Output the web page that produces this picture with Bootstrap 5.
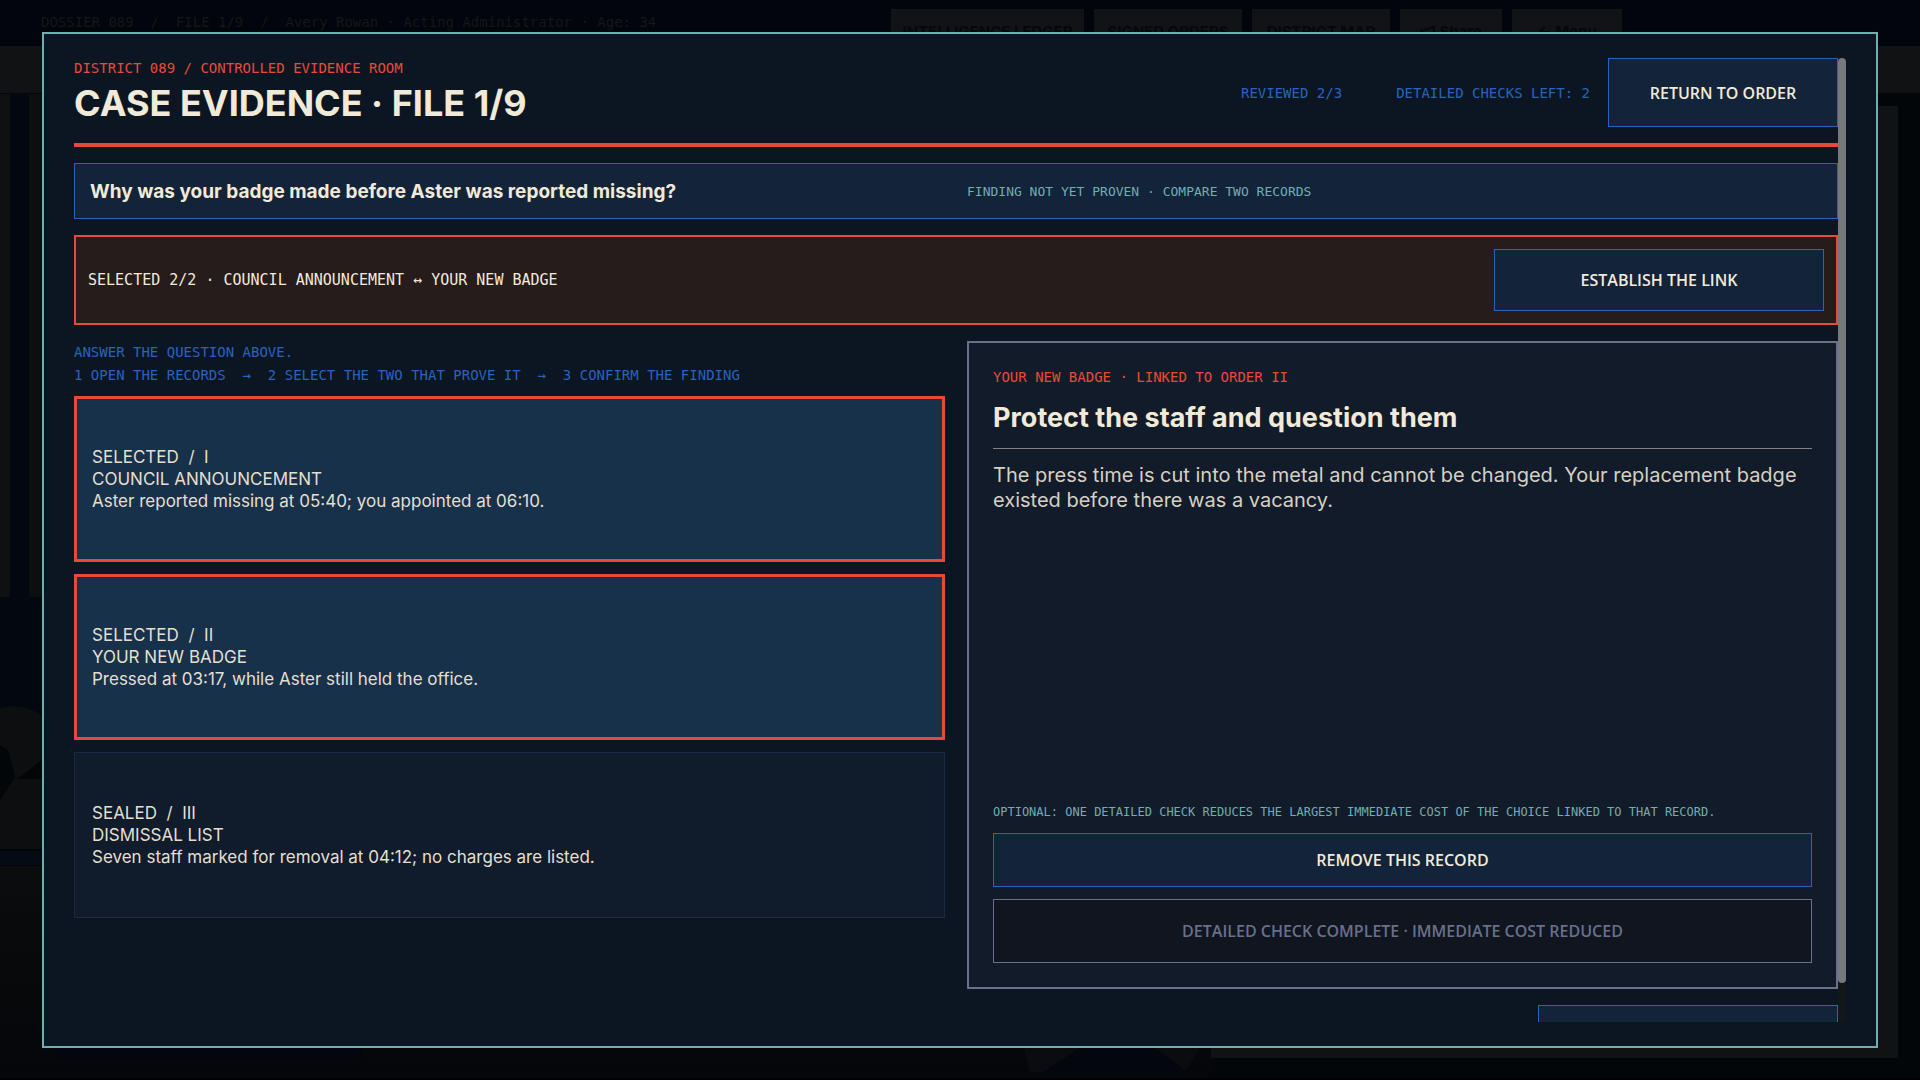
<!DOCTYPE html>
<html lang="en">
<head>
<meta charset="utf-8">
<meta name="viewport" content="width=device-width, initial-scale=1">
<title>Case Evidence · File 1/9</title>
<link href="https://cdn.jsdelivr.net/npm/bootstrap@5.3.0/dist/css/bootstrap.min.css" rel="stylesheet">
<style>
:root{--paper:#f2ead9;--red:#e84a3a;--blue:#2a62bd;--teal:#72adb0;--panel:#0c1623;--slate:#68708a;--btn:#13233a}
body{height:100vh;margin:0;overflow:hidden;background:#030609;color:var(--paper);font-family:Inter,"Noto Sans",sans-serif}
.mono{font-family:"DejaVu Sans Mono","Liberation Mono",monospace;font-size:14px;line-height:18px}
.mono-12{font-size:12px}
.mono-13{font-size:13px}
.mono-15{font-size:15px}
.c-red{color:var(--red)}
.c-blue{color:var(--blue)}
.c-teal{color:var(--teal)}
.keep{white-space:pre-wrap}

/* dimmed desk behind the dialog */
.scene{position:absolute;inset:0;width:100%;height:100%}
.topbar{height:46px;padding:9px 298px 0 41px;background:#02050b;color:#14171c;position:relative}
.topbar .mono{line-height:27px}
.topbar-actions{gap:10px}
.topbar button{height:46px;padding:0;border:0;background:#111316;color:#050709;font:700 15px/46px Inter,sans-serif}
.topbar .w-a{width:193px}.topbar .w-b{width:148px}.topbar .w-c{width:138px}.topbar .w-d{width:102px}.topbar .w-e{width:110px}

/* dialog */
.dossier{position:fixed;inset:32px 42px;padding:24px 30px;border:2px solid var(--teal);background:var(--panel);display:flex}
.scroller{flex:1;min-width:0;overflow-y:auto;overflow-x:hidden;scrollbar-width:none}
.scroller::-webkit-scrollbar{display:none}
.scroll-rail{width:8px;flex:none;border-radius:4px;background:#14171a}
.scroll-thumb{height:96%;border-radius:4px;background:#77787b}
.sheet{gap:16px}
.head{padding-bottom:16px;border-bottom:4px solid var(--red)}
.head h1{margin:2px 0 0;font-size:36px;line-height:48px;font-weight:700}
.head-side{gap:18px}
.counts{gap:54px}
.cmd{border:1px solid var(--blue);border-radius:0;background:var(--btn);color:var(--paper);font:600 16px/22px "Open Sans","Noto Sans",sans-serif;padding:0 16px}
.cmd:disabled{border-color:var(--slate);background:#10151f;color:var(--slate)}
.cmd-return{width:230px;height:69px}
.cmd-link{width:330px;height:62px}
.cmd-remove{height:54px}
.cmd-check{height:64px}
.cmd-next{width:300px;height:58px}
.halves{display:grid;grid-template-columns:1fr 1fr;column-gap:22px}
.question{min-height:56px;padding:2px 15px 0;border:1px solid var(--blue);background:var(--btn)}
.question h2{margin:0;font-size:19px;line-height:26px;font-weight:700}
.picked{padding:12px;border:2px solid var(--red);background:#251c1b}
.steps{line-height:23px;margin-bottom:9px}
.records{gap:12px}
.record{height:166px;padding:0 17px;border:1px solid #1a2a42;background:#101c2b;color:#e5dfd0;font-size:17px;line-height:22px;text-align:left}
.record.is-picked{border-color:var(--red);box-shadow:inset 0 0 0 2px var(--red);background:#18314b}
.detail{min-height:648px;padding:24px;border:2px solid var(--slate);background:#121b2a}
.detail .mono{line-height:20px}
.detail h2{margin:0;padding:13px 0 13px;border-bottom:1px solid #858083;font-size:27px;line-height:35px;font-weight:700}
.detail .story{margin:14px 0 0;font-size:20px;line-height:25px;color:#d6d0c4}
.detail-actions{gap:11px}
.detail-actions .cmd-check{margin-top:1px}
</style>
</head>
<body>
<svg class="scene" viewBox="0 0 1920 1080" preserveAspectRatio="none" aria-hidden="true">
  <defs>
    <linearGradient id="floor" x1="0" y1="0" x2="0" y2="1"><stop offset="0" stop-color="#0a0b0d"/><stop offset="1" stop-color="#040609"/></linearGradient>
  </defs>
  <rect width="1920" height="1080" fill="#030609"/>
  <rect y="46" width="1920" height="47" fill="#111214"/>
  <rect y="94" width="10" height="503" fill="#0e1011"/>
  <rect x="10" y="94" width="19" height="503" fill="#03070f"/>
  <rect x="29" y="94" width="13" height="503" fill="#0c0e10"/>
  <rect y="597" width="42" height="130" fill="#03070f"/>
  <path d="M0 708Q24 702 42 716V760L16 780L8 750L0 745Z" fill="#0d0e10"/>
  <path d="M0 800L14 779H42V849H0Z" fill="#0c0e0f"/>
  <rect y="851" width="42" height="14" fill="#040b14"/>
  <rect y="866" width="42" height="32" fill="#0b0c0e"/>
  <rect y="898" width="1212" height="182" fill="url(#floor)"/>
  <rect x="56" y="1040" width="306" height="18" fill="#02050b"/>
  <path d="M1024 1048H1200L1185 1072H1030Z" fill="#0b0c0f"/>
  <path d="M1080 1048H1155L1190 1074H1040Z" fill="#03060d"/>
  <rect x="1211" y="106" width="687" height="952" fill="#111214"/>
  <rect y="1078" width="1920" height="2" fill="#000"/>
</svg>
<header class="topbar d-flex justify-content-between align-items-start" aria-hidden="true">
  <span class="mono keep">DOSSIER 089  /  FILE 1/9  /  Avery Rowan · Acting Administrator · Age: 34</span>
  <div class="topbar-actions d-flex">
    <button type="button" tabindex="-1" class="w-a text-nowrap">INTELLIGENCE LEDGER</button>
    <button type="button" tabindex="-1" class="w-b text-nowrap">SIGNED ORDERS</button>
    <button type="button" tabindex="-1" class="w-c text-nowrap">DISTRICT MAP</button>
    <button type="button" tabindex="-1" class="w-d text-nowrap"><svg width="16" height="16" viewBox="0 0 16 16" fill="none" stroke="#050709" stroke-width="2"><path d="M1 6L14 2V13L1 9Z"/></svg> Share</button>
    <button type="button" tabindex="-1" class="w-e text-nowrap">← Menu</button>
  </div>
</header>

<main class="dossier" role="dialog" aria-label="Case evidence">
  <div class="scroller">
    <div class="sheet d-flex flex-column">
      <header class="head d-flex align-items-center justify-content-between">
        <div>
          <div class="mono c-red">DISTRICT 089 / CONTROLLED EVIDENCE ROOM</div>
          <h1>CASE EVIDENCE · FILE 1/9</h1>
        </div>
        <div class="head-side d-flex align-items-center">
          <div class="counts mono c-blue d-flex"><span>REVIEWED 2/3</span><span>DETAILED CHECKS LEFT: 2</span></div>
          <button type="button" class="btn cmd cmd-return">RETURN TO ORDER</button>
        </div>
      </header>

      <section class="question halves align-items-center">
        <h2>Why was your badge made before Aster was reported missing?</h2>
        <span class="mono mono-13 c-teal">FINDING NOT YET PROVEN · COMPARE TWO RECORDS</span>
      </section>

      <section class="picked d-flex align-items-center justify-content-between">
        <span class="mono mono-15">SELECTED 2/2 · COUNCIL ANNOUNCEMENT ↔ YOUR NEW BADGE</span>
        <button type="button" class="btn cmd cmd-link">ESTABLISH THE LINK</button>
      </section>

      <section class="halves">
        <div>
          <div class="mono steps c-blue keep">ANSWER THE QUESTION ABOVE.
1 OPEN THE RECORDS  →  2 SELECT THE TWO THAT PROVE IT  →  3 CONFIRM THE FINDING</div>
          <div class="records d-flex flex-column">
            <button type="button" class="record is-picked keep" aria-pressed="true">SELECTED  /  I
COUNCIL ANNOUNCEMENT
Aster reported missing at 05:40; you appointed at 06:10.</button>
            <button type="button" class="record is-picked keep" aria-pressed="true">SELECTED  /  II
YOUR NEW BADGE
Pressed at 03:17, while Aster still held the office.</button>
            <button type="button" class="record keep" aria-pressed="false">SEALED  /  III
DISMISSAL LIST
Seven staff marked for removal at 04:12; no charges are listed.</button>
          </div>
        </div>
        <article class="detail d-flex flex-column">
          <div class="mono c-red">YOUR NEW BADGE · LINKED TO ORDER II</div>
          <h2>Protect the staff and question them</h2>
          <p class="story">The press time is cut into the metal and cannot be changed. Your replacement badge existed before there was a vacancy.</p>
          <div class="detail-actions mt-auto d-flex flex-column">
            <span class="mono mono-12 c-teal">OPTIONAL: ONE DETAILED CHECK REDUCES THE LARGEST IMMEDIATE COST OF THE CHOICE LINKED TO THAT RECORD.</span>
            <button type="button" class="btn cmd cmd-remove">REMOVE THIS RECORD</button>
            <button type="button" class="btn cmd cmd-check opacity-100" disabled>DETAILED CHECK COMPLETE · IMMEDIATE COST REDUCED</button>
          </div>
        </article>
      </section>

      <footer class="d-flex justify-content-end">
        <button type="button" class="btn cmd cmd-next" aria-label="Continue"></button>
      </footer>
    </div>
  </div>
  <div class="scroll-rail" aria-hidden="true"><div class="scroll-thumb"></div></div>
</main>
<script src="https://cdn.jsdelivr.net/npm/bootstrap@5.3.0/dist/js/bootstrap.bundle.min.js"></script>
</body>
</html>
